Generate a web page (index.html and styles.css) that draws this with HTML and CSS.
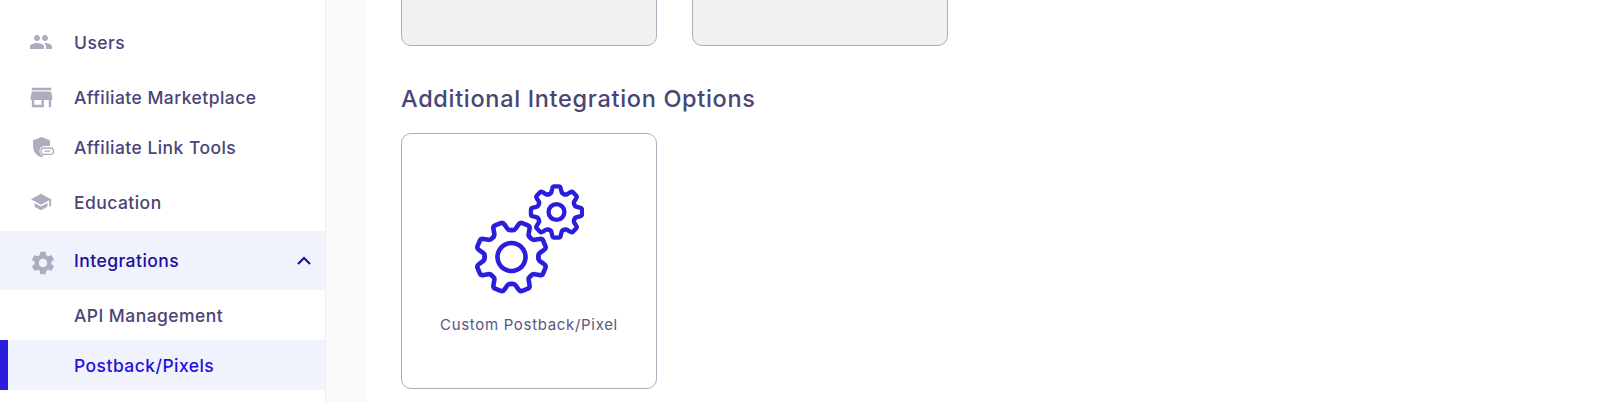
FILE: index.html
```html
<!DOCTYPE html>
<html lang="en">
<head>
<meta charset="utf-8">
<title>Integrations</title>
<link rel="stylesheet" href="styles.css">
</head>
<body>
<div class="app">
  <nav class="sidebar">
    <a class="item item-users">
      <span class="ico"><svg class="i-people" viewBox="0 0 24 24"><path d="M16 11c1.66 0 2.99-1.34 2.99-3S17.66 5 16 5c-1.66 0-3 1.34-3 3s1.34 3 3 3zm-8 0c1.66 0 2.99-1.34 2.99-3S9.66 5 8 5C6.34 5 5 6.34 5 8s1.34 3 3 3zm0 2c-2.33 0-7 1.17-7 3.5V19h14v-2.5c0-2.33-4.67-3.5-7-3.5zm8 0c-.29 0-.62.02-.97.05 1.16.84 1.97 1.97 1.97 3.45V19h6v-2.5c0-2.33-4.67-3.5-7-3.5z"/></svg></span>
      <span>Users</span>
    </a>
    <a class="item item-market">
      <span class="ico"><svg class="i-store" viewBox="0 0 24 24"><path d="M20 4H4v2h16V4zm1 10v-2l-1-5H4l-1 5v2h1v6h10v-6h4v6h2v-6h1zm-9 4H6v-4h6v4z"/></svg></span>
      <span>Affiliate Marketplace</span>
    </a>
    <a class="item">
      <span class="ico"><svg class="i-shield" viewBox="0 0 24 24"><path d="M9.5 2 1 5.2v6.2C1 16.400 4.400 20.800 9.500 22c4-.9 7-3.800 8-7.500.4-1.300.5-2.600.5-3.100V5.200L9.500 2z"/><rect class="halo" x="7.500" y="11" width="15.500" height="10" rx="5"/><rect class="link" x="9" y="13" width="12.500" height="6.400" rx="3.200"/><path class="link" d="M12.500 16.200h5.500"/></svg></span>
      <span>Affiliate Link Tools</span>
    </a>
    <a class="item item-edu">
      <span class="ico"><svg class="i-school" viewBox="0 0 24 24"><path d="M5 13.18v4L12 21l7-3.82v-4L12 17l-7-3.82zM12 3L1 9l11 6 9-4.91V17h2V9L12 3z"/></svg></span>
      <span>Education</span>
    </a>
    <a class="item parent">
      <span class="ico"><svg class="i-gear" viewBox="0 0 24 24"><path d="M19.14 12.94c.04-.3.06-.61.06-.94 0-.32-.02-.64-.07-.94l2.03-1.58c.18-.14.23-.41.12-.61l-1.92-3.32c-.12-.22-.37-.29-.59-.22l-2.39.96c-.5-.38-1.03-.7-1.62-.94l-.36-2.54c-.04-.24-.24-.41-.48-.41h-3.84c-.24 0-.43.17-.47.41l-.36 2.54c-.59.24-1.13.57-1.62.94l-2.39-.96c-.22-.08-.47 0-.59.22L2.74 8.87c-.12.21-.08.47.12.61l2.03 1.58c-.05.3-.09.63-.09.94s.02.64.07.94l-2.03 1.58c-.18.14-.23.41-.12.61l1.92 3.32c.12.22.37.29.59.22l2.39-.96c.5.38 1.03.7 1.62.94l.36 2.54c.05.24.24.41.48.41h3.84c.24 0 .44-.17.47-.41l.36-2.54c.59-.24 1.13-.56 1.62-.94l2.39.96c.22.08.47 0 .59-.22l1.92-3.32c.12-.22.07-.47-.12-.61l-2.01-1.58zM12 15.6c-1.98 0-3.6-1.62-3.6-3.6s1.62-3.6 3.6-3.6 3.6 1.62 3.6 3.6-1.62 3.6-3.6 3.6z"/></svg></span>
      <span>Integrations</span>
      <svg class="chev" viewBox="0 0 16 10"><path d="M2 8l6-6 6 6"/></svg>
    </a>
    <a class="item sub">API Management</a>
    <a class="item sub active">Postback/Pixels</a>
  </nav>
  <div class="gutter"></div>
  <main class="main">
    <div class="cards cards-top">
      <div class="card disabled"></div>
      <div class="card disabled"></div>
    </div>
    <h2 class="heading">Additional Integration Options</h2>
    <div class="cards">
      <div class="card">
        <svg class="gears" viewBox="0 0 110 110">
          <defs>
            <path id="seg" d="M-10.3-24.900Q-7.500-25.500-7-28L-6-32.500Q-5.500-35.500-3-35.500L3-35.500Q5.500-35.500 6-32.500L7-28Q7.500-25.500 10.300-24.900"/>
            <g id="gear">
              <use href="#seg"/>
              <use href="#seg" transform="rotate(45)"/>
              <use href="#seg" transform="rotate(90)"/>
              <use href="#seg" transform="rotate(135)"/>
              <use href="#seg" transform="rotate(180)"/>
              <use href="#seg" transform="rotate(225)"/>
              <use href="#seg" transform="rotate(270)"/>
              <use href="#seg" transform="rotate(315)"/>
            </g>
          </defs>
          <g class="big" transform="translate(37.500 73) rotate(22.500)">
            <use href="#gear"/>
            <circle r="14"/>
          </g>
          <g class="small" transform="translate(82.500 28) scale(.72)">
            <use href="#gear"/>
            <circle r="11"/>
          </g>
        </svg>
        <div class="label">Custom Postback/Pixel</div>
      </div>
    </div>
  </main>
</div>
</body>
</html>
```
FILE: styles.css
```css
* { box-sizing: border-box; }
html, body { margin: 0; height: 100%; overflow: hidden; background: #fff; }
body { font-family: "Inter", "Liberation Sans", sans-serif; color: #4a4576; }

.app { display: flex; height: 402px; overflow: hidden; }

.sidebar {
  flex: 0 0 326px;
  padding-top: 18px;
  background: #fff;
  border-right: 1px solid #efeff2;
}
.item {
  display: flex;
  align-items: center;
  gap: 21px;
  height: 50px;
  padding-left: 29px;
  font-size: 17.5px;
  font-weight: 500;
  letter-spacing: .45px;
  color: #4a4576;
}
.item-users { padding-bottom: 2px; }
.item-market { margin-top: 4px; }
.item-edu { margin-top: 6px; padding-bottom: 2px; }

.ico { flex: 0 0 24px; min-width: 0; height: 24px; display: flex; align-items: center; justify-content: center; }
.ico svg { flex: none; fill: #aeadc0; }
.i-people { width: 24px; height: 24px; }
.i-store { width: 29px; height: 29px; }
.i-shield { width: 24px; height: 24px; margin: 0 -3px 0 3px; }
.i-school { width: 22px; height: 22px; }
.i-gear { width: 28px; height: 28px; margin: 4px -2px 0 2px; }
.ico .halo { fill: #fff; }
.ico .link { fill: none; stroke: #aeadc0; stroke-width: 1.3; }

.parent {
  height: 59px;
  margin-top: 3px;
  padding-right: 13px;
  background: #f0f2fc;
  color: #17109c;
}
.chev { width: 16px; height: 10px; margin-left: auto; fill: none; stroke: #17109c; stroke-width: 2; }

.sub { padding-left: 74px; }
.active {
  background: #f0f2fc;
  color: #1f10e0;
  border-left: 8px solid #2a1ddc;
  padding-left: 66px;
}

.gutter { flex: 0 0 41px; background: #fafafa; }

.main { flex: 1; padding-left: 34px; }

.cards { display: flex; gap: 35px; }
.cards-top { margin-top: -210px; }
.card {
  flex: 0 0 256px;
  height: 256px;
  padding-top: 50px;
  border: 1px solid #aeadc0;
  border-radius: 10px;
  background: #fff;
  display: flex;
  flex-direction: column;
  align-items: center;
}
.disabled { background: #f1f1f1; }

.heading {
  margin: 38px 0 19px;
  height: 30px;
  line-height: 30px;
  font-size: 23.5px;
  font-weight: 500;
  letter-spacing: .68px;
  color: #4a4576;
}

.gears { width: 110px; height: 110px; flex: none; fill: none; stroke: #2a1ddc; stroke-linecap: round; stroke-linejoin: round; }
.big { stroke-width: 4.6; }
.small { stroke-width: 6; }
.label { margin-top: 21px; font-size: 15px; letter-spacing: .68px; color: #5a5680; }
```
